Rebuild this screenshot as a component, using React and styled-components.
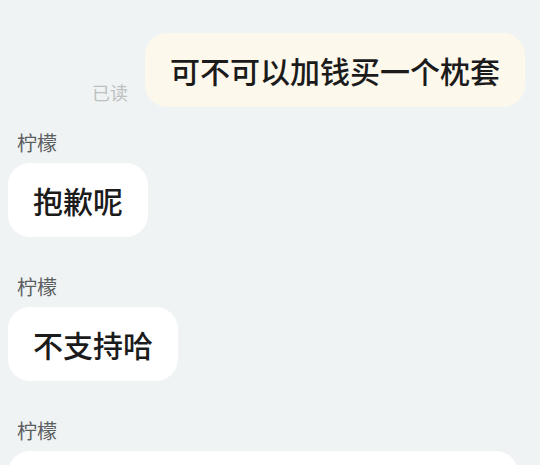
import React from 'react';
import styled, { createGlobalStyle } from 'styled-components';

const GlobalStyle = createGlobalStyle`
  html, body {
    margin: 0;
    padding: 0;
    background: #eff3f4;
    font-family: "Noto Sans CJK SC", "Noto Sans", sans-serif;
  }
`;

const Chat = styled.div`
  height: 465px;
  overflow: hidden;
  padding: 33px 15px 0 8px;
  display: flex;
  flex-direction: column;
  box-sizing: border-box;
`;

const SentRow = styled.div`
  display: flex;
  justify-content: flex-end;
  align-items: flex-end;
  gap: 17px;
`;

const ReadMark = styled.span`
  font-size: 18px;
  line-height: 24px;
  color: #bdbfc0;
  margin-bottom: 3px;
`;

const Group = styled.div`
  display: flex;
  flex-direction: column;
  align-items: flex-start;
  margin-top: ${(p) => p.$gap}px;
`;

const Name = styled.div`
  font-size: 20px;
  line-height: 28px;
  color: #5b5e60;
  padding-left: 9px;
  margin-bottom: 6px;
`;

const Bubble = styled.div`
  padding: 18px 25px;
  border-radius: 22px;
  font-size: 30px;
  line-height: 38px;
  font-weight: 500;
  color: #1b1b1b;
  white-space: ${(p) => (p.$wrap ? 'normal' : 'nowrap')};
  background: ${(p) => (p.$mine ? '#fdf8ec' : '#ffffff')};
  ${(p) => p.$wrap && 'width: 460px;'}
`;

const messages = [
  { text: '抱歉呢', gap: 22 },
  { text: '不支持哈', gap: 36 },
  { text: '亲亲，枕套目前只能跟随整套床品一起购买，单独加购的话暂时没有办法哦', gap: 36, wrap: true },
];

export default function App() {
  return (
    <>
      <GlobalStyle />
      <Chat>
        <SentRow>
          <ReadMark>已读</ReadMark>
          <Bubble $mine>可不可以加钱买一个枕套</Bubble>
        </SentRow>
        {messages.map((m, i) => (
          <Group key={i} $gap={m.gap}>
            <Name>柠檬</Name>
            <Bubble $wrap={m.wrap}>{m.text}</Bubble>
          </Group>
        ))}
      </Chat>
    </>
  );
}
